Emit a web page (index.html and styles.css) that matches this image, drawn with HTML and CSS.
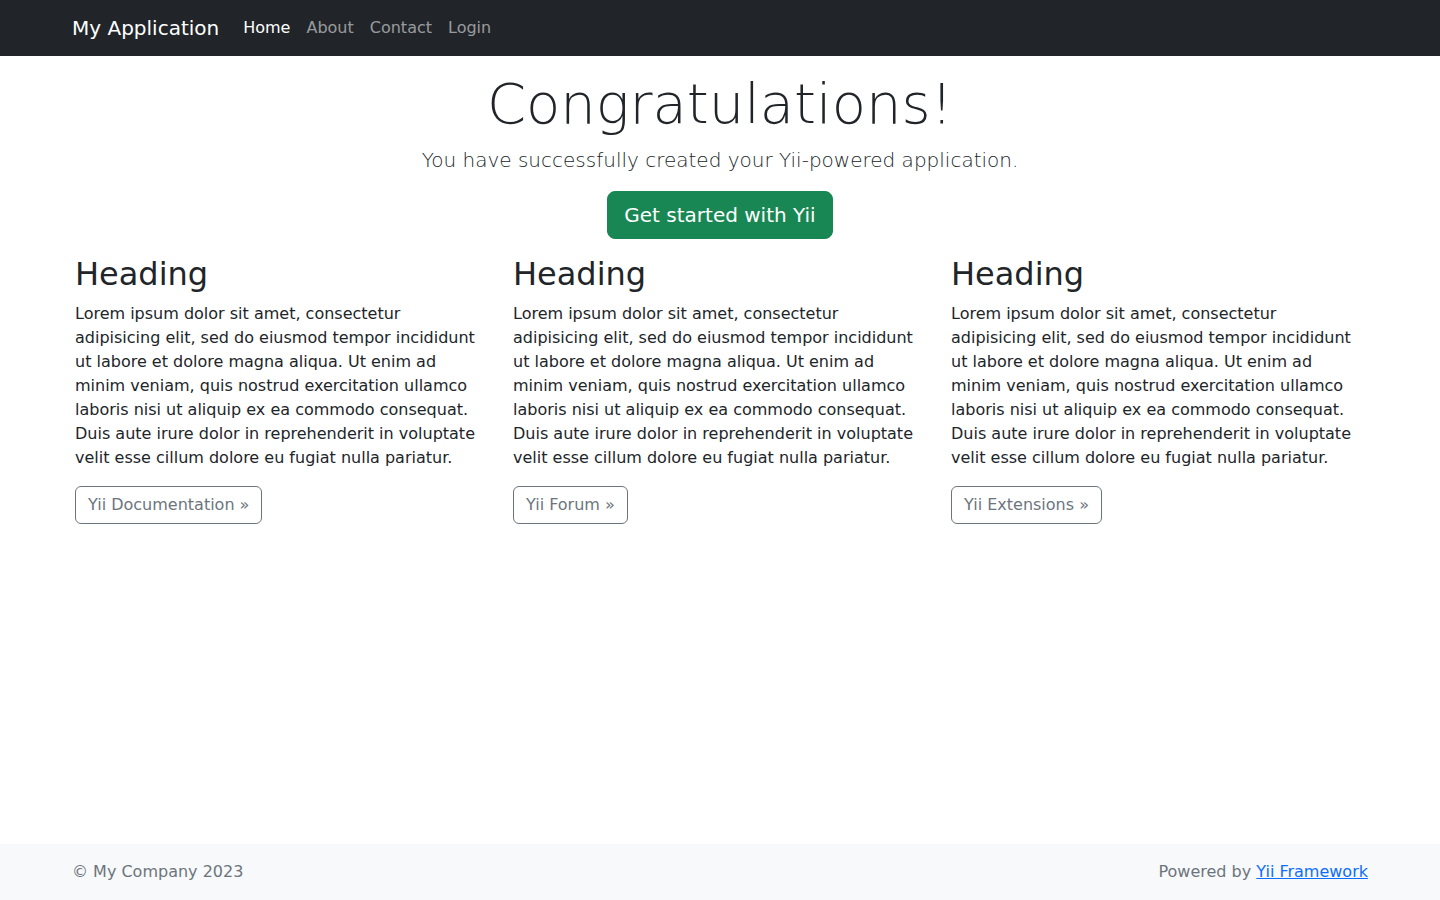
FILE: index.html
```html
<!DOCTYPE html>
<html lang="en">
<head>
<meta charset="utf-8">
<title>My Yii Application</title>
<link rel="stylesheet" href="styles.css">
</head>
<body>
<header class="site-header">
  <nav class="navbar">
    <div class="container nav-inner">
      <a class="brand" href="#">My Application</a>
      <ul class="nav">
        <li><a class="nav-link active" href="#">Home</a></li>
        <li><a class="nav-link" href="#">About</a></li>
        <li><a class="nav-link" href="#">Contact</a></li>
        <li><a class="nav-link" href="#">Login</a></li>
      </ul>
    </div>
  </nav>
</header>
<main class="main">
  <div class="container main-container">
    <div class="jumbotron">
      <h1 class="display">Congratulations!</h1>
      <p class="lead">You have successfully created your Yii-powered application.</p>
      <p class="cta"><a class="btn btn-lg btn-success" href="#">Get started with Yii</a></p>
    </div>
    <div class="body-content">
      <div class="row">
        <div class="col">
          <h2>Heading</h2>
          <p>Lorem ipsum dolor sit amet, consectetur adipisicing elit, sed do eiusmod tempor incididunt ut labore et dolore magna aliqua. Ut enim ad minim veniam, quis nostrud exercitation ullamco laboris nisi ut aliquip ex ea commodo consequat. Duis aute irure dolor in reprehenderit in voluptate velit esse cillum dolore eu fugiat nulla pariatur.</p>
          <p><a class="btn btn-outline" href="#">Yii Documentation &raquo;</a></p>
        </div>
        <div class="col">
          <h2>Heading</h2>
          <p>Lorem ipsum dolor sit amet, consectetur adipisicing elit, sed do eiusmod tempor incididunt ut labore et dolore magna aliqua. Ut enim ad minim veniam, quis nostrud exercitation ullamco laboris nisi ut aliquip ex ea commodo consequat. Duis aute irure dolor in reprehenderit in voluptate velit esse cillum dolore eu fugiat nulla pariatur.</p>
          <p><a class="btn btn-outline" href="#">Yii Forum &raquo;</a></p>
        </div>
        <div class="col">
          <h2>Heading</h2>
          <p>Lorem ipsum dolor sit amet, consectetur adipisicing elit, sed do eiusmod tempor incididunt ut labore et dolore magna aliqua. Ut enim ad minim veniam, quis nostrud exercitation ullamco laboris nisi ut aliquip ex ea commodo consequat. Duis aute irure dolor in reprehenderit in voluptate velit esse cillum dolore eu fugiat nulla pariatur.</p>
          <p><a class="btn btn-outline" href="#">Yii Extensions &raquo;</a></p>
        </div>
      </div>
    </div>
  </div>
</main>
<footer class="footer">
  <div class="container footer-inner">
    <div class="footer-left">&copy; My Company 2023</div>
    <div class="footer-right">Powered by <a href="#">Yii Framework</a></div>
  </div>
</footer>
</body>
</html>
```
FILE: styles.css
```css
* { box-sizing: border-box; }
html, body { height: 100%; }
body {
  margin: 0;
  font-family: "DejaVu Sans", sans-serif;
  font-size: 16px;
  line-height: 1.5;
  color: #212529;
  background: #fff;
  display: flex;
  flex-direction: column;
}
.container {
  width: 100%;
  max-width: 1320px;
  margin: 0 auto;
  padding: 0 12px;
}
.site-header {
  position: fixed;
  top: 0;
  left: 0;
  right: 0;
  z-index: 10;
}
.navbar {
  background: #212529;
  padding: 8px 0;
}
.nav-inner {
  display: flex;
  align-items: center;
}
.brand {
  color: #fff;
  text-decoration: none;
  font-size: 20px;
  line-height: 30px;
  padding: 5px 0;
  margin-right: 16px;
}
.nav {
  list-style: none;
  margin: 0;
  padding: 0;
  display: flex;
}
.nav-link {
  display: block;
  padding: 8px;
  color: rgba(255, 255, 255, 0.55);
  text-decoration: none;
  line-height: 24px;
}
.nav-link.active { color: #fff; }
.main { flex-shrink: 0; }
.main-container { padding: 70px 15px 20px; }
.jumbotron { text-align: center; }
.display {
  font-size: 56px;
  font-weight: 300;
  line-height: 1.2;
  margin: 0 0 8px;
}
.lead {
  font-size: 20px;
  font-weight: 300;
  margin: 0 0 16px;
}
.cta { margin: 0 0 16px; }
.btn {
  display: inline-block;
  text-decoration: none;
  border: 1px solid transparent;
  border-radius: 6px;
  padding: 6px 12px;
  font-size: 16px;
  line-height: 24px;
}
.btn-lg {
  padding: 8px 16px;
  font-size: 20px;
  line-height: 30px;
  border-radius: 8px;
}
.btn-success {
  background: #198754;
  border-color: #198754;
  color: #fff;
}
.btn-outline {
  color: #6c757d;
  border-color: #6c757d;
}
.row {
  display: flex;
  margin: 0 -12px;
}
.col {
  flex: 1 1 0;
  padding: 0 12px;
  margin-bottom: 16px;
}
.col h2 {
  font-size: 32px;
  font-weight: 500;
  line-height: 1.2;
  margin: 0 0 8px;
}
.col p { margin: 0 0 16px; }
.footer {
  margin-top: auto;
  background: #f8f9fa;
  padding: 16px 0;
  color: #6c757d;
}
.footer-inner {
  display: flex;
  justify-content: space-between;
}
.footer a { color: #0d6efd; }
```
